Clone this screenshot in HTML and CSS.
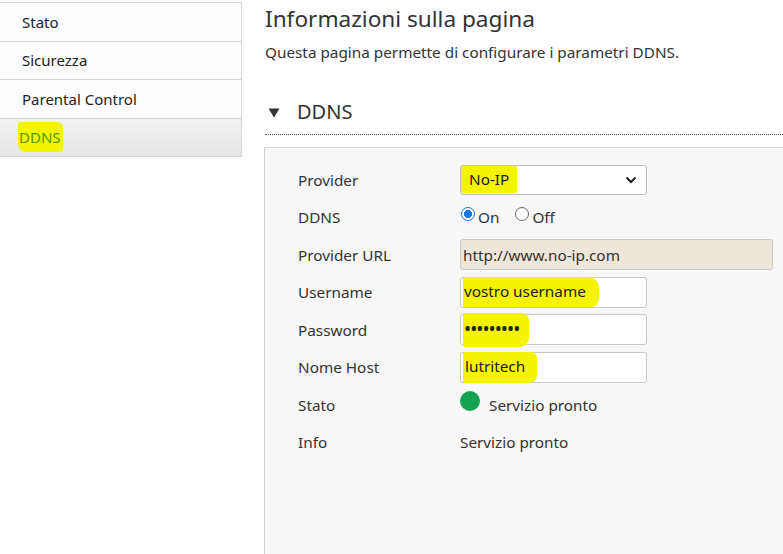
FILE: index.html
```html
<!DOCTYPE html>
<html lang="it">
<head>
<meta charset="utf-8">
<title>DDNS</title>
<link rel="stylesheet" href="styles.css">
</head>
<body>
<div class="page">
  <nav class="sidebar">
    <div class="nav-item">Stato</div>
    <div class="nav-item">Sicurezza</div>
    <div class="nav-item">Parental Control</div>
    <div class="nav-item active"><span class="hl hl-nav">DDNS</span></div>
  </nav>
  <main class="main">
    <h1 class="title">Informazioni sulla pagina</h1>
    <p class="subtitle">Questa pagina permette di configurare i parametri DDNS.</p>
    <div class="section-head">
      <svg class="tri" width="12" height="10" viewBox="0 0 12 10"><path d="M0.5 0.5 H11.5 L6 9.5 Z" fill="#333"/></svg>
      <span class="section-title">DDNS</span>
    </div>
    <div class="panel">
      <div class="form">
        <div class="label">Provider</div>
        <div class="ctrl">
          <div class="select">
            <span class="hl hl-sel">No-IP</span>
            <svg class="chev" width="12" height="8" viewBox="0 0 12 8"><path d="M1.5 1.5 L6 6 L10.5 1.5" fill="none" stroke="#222" stroke-width="2"/></svg>
          </div>
        </div>

        <div class="label">DDNS</div>
        <div class="ctrl radios">
          <span class="radio checked"></span><span class="rtext">On</span>
          <span class="radio"></span><span class="rtext">Off</span>
        </div>

        <div class="label">Provider URL</div>
        <div class="ctrl"><div class="input wide readonly">http://www.no-ip.com</div></div>

        <div class="label">Username</div>
        <div class="ctrl"><div class="input"><span class="hl hl-user">vostro username</span></div></div>

        <div class="label">Password</div>
        <div class="ctrl"><div class="input"><span class="hl hl-pass">&#8226;&#8226;&#8226;&#8226;&#8226;&#8226;&#8226;&#8226;&#8226;</span></div></div>

        <div class="label">Nome Host</div>
        <div class="ctrl"><div class="input"><span class="hl hl-host">lutritech</span></div></div>

        <div class="label">Stato</div>
        <div class="ctrl status"><span class="dot"></span><span>Servizio pronto</span></div>

        <div class="label">Info</div>
        <div class="ctrl">Servizio pronto</div>
      </div>
    </div>
  </main>
</div>
</body>
</html>
```
FILE: styles.css
```css
* { box-sizing: border-box; }
html, body {
  margin: 0;
  padding: 0;
  background: #fff;
}
body {
  font-family: "Noto Sans", "Open Sans", sans-serif;
  color: #333;
  overflow: hidden;
  height: 554px;
}
.page {
  display: flex;
  align-items: flex-start;
  height: 554px;
}
.sidebar {
  width: 242px;
  flex: 0 0 242px;
  margin-top: 2px;
  border-top: 1px solid #d6d6d6;
  border-right: 1px solid #d6d6d6;
}
.nav-item {
  height: 38.5px;
  display: flex;
  align-items: center;
  padding-left: 22px;
  font-size: 15px;
  color: #222;
  background: #fdfdfd;
  border-bottom: 1px solid #d2d2d2;
}
.nav-item.active {
  background: linear-gradient(#f2f2f2, #e6e6e6);
  color: #4fa000;
}
.hl {
  background: #f4f400;
}
.hl-nav {
  padding: 5px 2px 5px 1px;
  margin-left: -4px;
  border-radius: 3px 6px 4px 8px;
  color: #4f9a00;
}
.main {
  flex: 1;
  margin-left: 23px;
  min-width: 0;
}
.title {
  font-size: 22.6px;
  font-weight: 400;
  margin: 4px 0 0;
  line-height: 30px;
  color: #333;
}
.subtitle {
  font-size: 15.3px;
  margin: 7px 0 0;
  line-height: 22px;
  color: #333;
}
.section-head {
  margin-top: 28px;
  height: 44px;
  display: flex;
  align-items: center;
  border-bottom: 1px dotted #555;
  padding-bottom: 2px;
}
.tri {
  display: block;
  margin-left: 3px;
  margin-right: 17px;
  margin-top: 2px;
}
.section-title {
  font-size: 20px;
  color: #333;
}
.panel {
  margin-top: 12px;
  margin-left: -1px;
  height: 420px;
  background: #f7f7f7;
  border-top: 1px solid #d8d8d8;
  border-left: 1px solid #d0d0d0;
  padding: 13px 0 0 33px;
}
.form {
  display: grid;
  grid-template-columns: 162px 1fr;
  grid-auto-rows: 37.5px;
  font-size: 15.3px;
}
.label {
  display: flex;
  align-items: center;
  color: #333;
}
.ctrl {
  display: flex;
  align-items: center;
  color: #333;
}
.select {
  width: 187px;
  height: 30px;
  background: #fff;
  border: 1px solid #bdbdbd;
  border-radius: 3px;
  display: flex;
  align-items: center;
  justify-content: space-between;
  padding: 0 9px 0 0;
}
.hl-sel {
  padding: 3px 8px 4px 8px;
  color: #222;
  border-radius: 2px;
}
.chev { display: block; }
.radio {
  width: 14px;
  height: 14px;
  border-radius: 50%;
  border: 1px solid #666;
  background: #fff;
  margin-left: 1px;
  margin-top: -6px;
}
.radio.checked {
  border: 1.5px solid #1a73e8;
  background: radial-gradient(circle, #1a73e8 0 3.8px, #fff 4.3px);
}
.rtext {
  margin-left: 3px;
  margin-right: 15px;
}
.input {
  width: 187px;
  height: 31px;
  background: #fff;
  border: 1px solid #c8c8c8;
  border-radius: 3px;
  display: flex;
  align-items: center;
  padding-left: 2px;
  color: #222;
}
.input.wide {
  width: 313px;
}
.input.readonly {
  background: #ede6da;
  border-color: #c9c9c9;
  color: #333;
}
.hl-user {
  padding: 4px 0 6px 1px;
  width: 136px;
  border-radius: 2px 10px 8px 3px;
}
.hl-pass {
  padding: 7px 3px 8px 1px;
  width: 66px;
  line-height: 1;
  letter-spacing: -1px;
  font-size: 19px;
  border-radius: 2px 8px 9px 3px;
}
.hl-host {
  padding: 4px 12px 7px 2px;
  border-radius: 2px 6px 8px 3px;
}
.status span:last-child { margin-left: 9px; }
.dot {
  width: 20px;
  height: 20px;
  border-radius: 50%;
  background: #16a251;
  margin-top: -8px;
}
```
